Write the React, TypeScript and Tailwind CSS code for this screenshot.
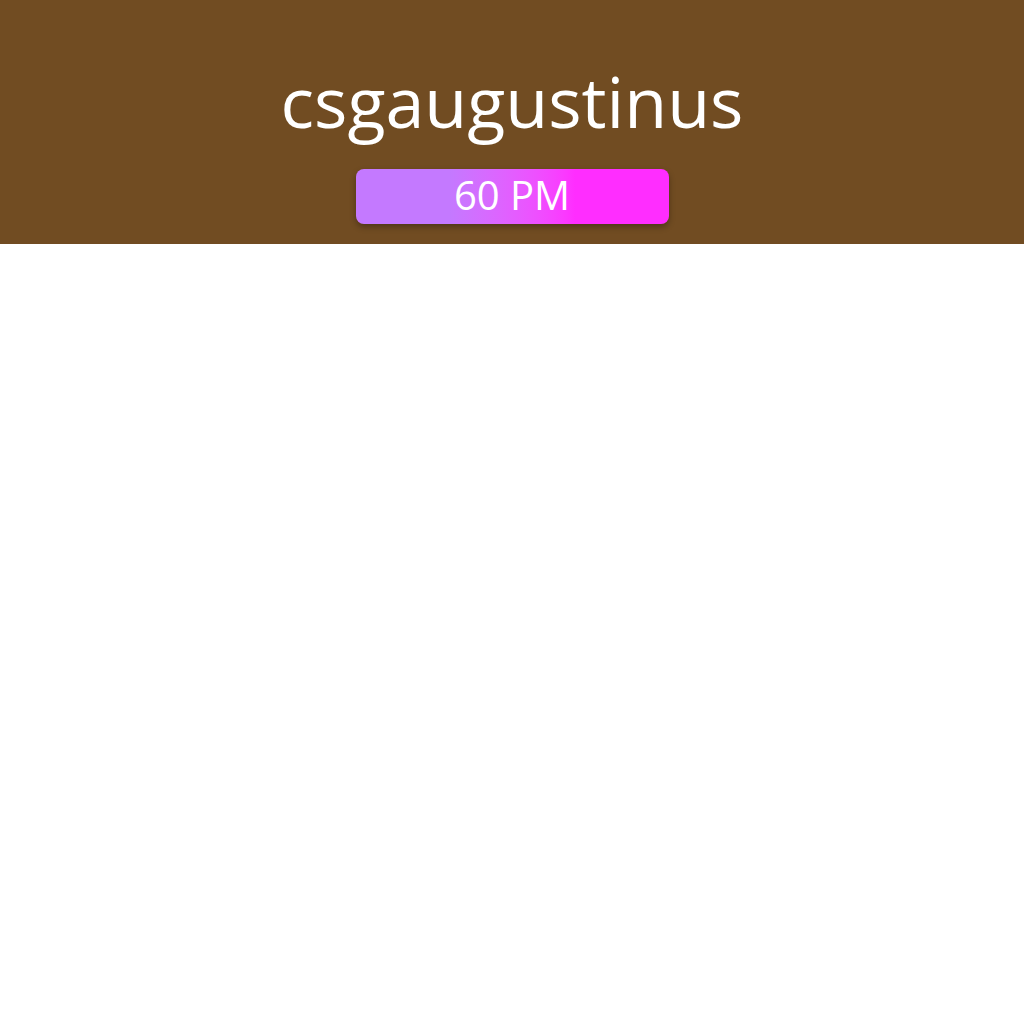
import React from "react";

export default function App() {
  return (
    <div className="min-h-screen bg-white">
      <header className="bg-[#714c22] h-[244px] flex flex-col items-center pt-[61px] font-['Open_Sans',sans-serif]">
        <h1 className="text-white text-[70px] leading-[80px] font-normal">csgaugustinus</h1>
        <div className="mt-[28px] w-[313px] h-[55px] rounded-lg bg-linear-to-r from-[#c479ff] from-30% to-[#ff2dff] to-70% shadow-[0_3px_6px_rgba(0,0,0,0.3)] flex items-center justify-center">
          <span className="text-white text-[40px] leading-none -mt-[3px]">60 PM</span>
        </div>
      </header>
    </div>
  );
}
